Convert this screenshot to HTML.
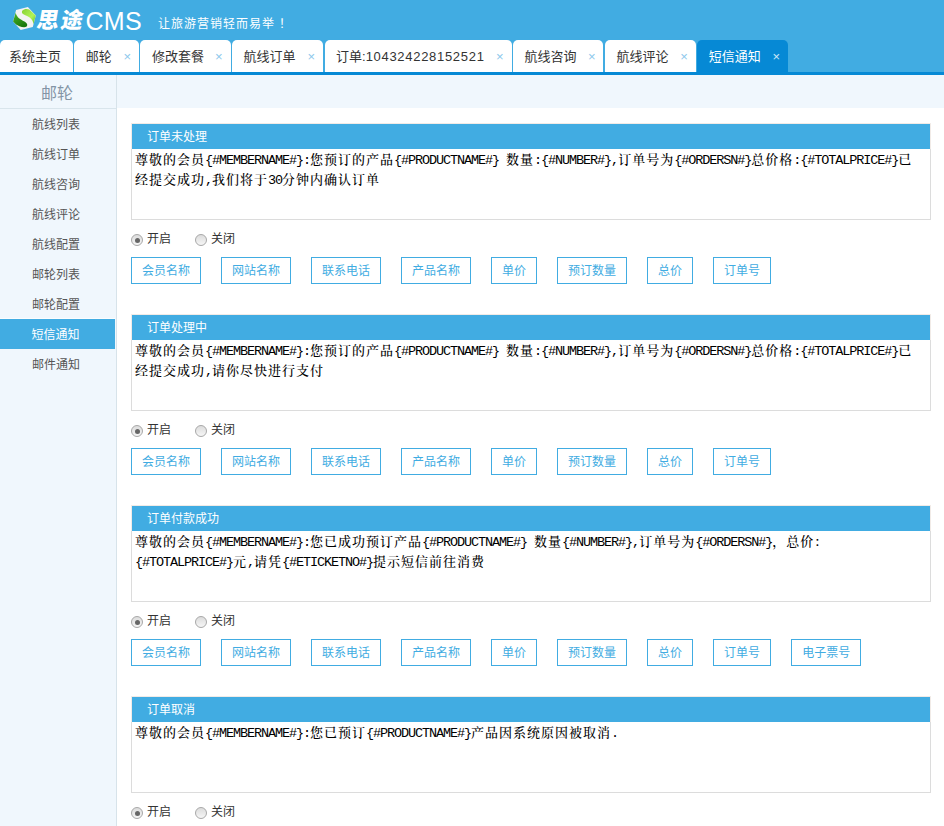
<!DOCTYPE html>
<html lang="zh-CN">
<head>
<meta charset="utf-8">
<title>思途CMS</title>
<style>
*{margin:0;padding:0;box-sizing:border-box;}
html,body{width:944px;height:826px;overflow:hidden;background:#fff;}
body{font-family:"Liberation Sans","Noto Sans CJK SC",sans-serif;font-size:12px;color:#333;position:relative;}
.header{position:absolute;left:0;top:0;width:944px;height:72px;background:#41ace2;}
.logo-icon{position:absolute;left:8px;top:2px;width:40px;height:35px;}
.logo-cn{position:absolute;left:37px;top:5px;font-size:22px;font-weight:900;color:#fff;line-height:32px;letter-spacing:2px;white-space:nowrap;transform:skewX(-10deg);}
.logo-en{position:absolute;left:85.5px;top:4.5px;font-size:25px;color:#fff;line-height:32px;letter-spacing:0.3px;font-weight:normal;white-space:nowrap;}
.slogan{position:absolute;left:158px;top:15px;font-size:12px;color:#fff;line-height:18px;letter-spacing:1px;white-space:nowrap;}
.tabs{position:absolute;left:0;top:40px;height:32px;white-space:nowrap;}
.tab{position:absolute;top:0;height:32px;background:#fff;border-radius:5px 5px 0 0;line-height:33px;font-size:13px;color:#333;padding-left:9px;white-space:nowrap;}
.tab .x{position:absolute;right:8px;top:0;color:#8cc8ec;font-size:13px;font-family:"Liberation Sans",sans-serif;}
.tab b{font-weight:normal;letter-spacing:0.7px;}
.tab.on{background:#0689d5;color:#fff;}
.tab.on .x{color:#cfe8f8;}
.line{position:absolute;left:0;top:72px;width:944px;height:3px;background:#0689d5;}
.side{position:absolute;left:0;top:75px;width:117px;height:751px;background:#f0f7fd;border-right:1px solid #d7e3ea;}
.side h3{height:34px;line-height:37px;text-align:center;font-size:16px;font-weight:normal;color:#8394a5;border-bottom:1px solid #d9e5ec;padding-right:2px;}
.side a{display:block;height:30px;line-height:32px;text-align:center;color:#555;font-size:12px;text-decoration:none;padding-right:4px;}
.side a.on{background:#41ace2;color:#fff;margin-right:1px;box-shadow:0 -1px 0 #fafdff;}
.band{position:absolute;left:117px;top:75px;width:827px;height:33px;background:#f0f7fd;}
.sec{position:absolute;left:131px;width:800px;}
.sec .hd{height:26px;line-height:27px;background:#41ace2;color:#fff;font-weight:normal;padding-left:15px;font-size:12px;border:1px solid #f1ebe7;border-bottom:none;}
.sec .ta{height:71px;border:1px solid #dcdcdc;border-top:none;padding:1px 4px 0 3px;font-family:"Noto Serif CJK SC",serif;font-size:13px;letter-spacing:1px;line-height:18px;color:#000;font-weight:500;}
.sec .ta i{font-style:normal;font-family:"Liberation Mono",monospace;font-size:13.5px;letter-spacing:-1.1px;font-weight:normal;}
.radios{position:absolute;left:131px;height:20px;line-height:20px;font-size:12px;color:#333;white-space:nowrap;}
.rd{display:inline-block;width:12px;height:12px;border-radius:50%;border:1px solid #a8a8a8;background:linear-gradient(#dcdcdc,#f6f6f6);vertical-align:-3px;margin-right:4px;position:relative;}
.rd.ck:after{content:"";position:absolute;left:2.5px;top:2.5px;width:5px;height:5px;border-radius:50%;background:#666;}
.btns{position:absolute;left:131px;height:27px;white-space:nowrap;}
.btn{display:inline-block;height:27px;line-height:27px;border:1px solid #41ace2;color:#41ace2;padding:0 10px;margin-right:20px;font-size:12px;background:#fff;vertical-align:top;}
</style>
</head>
<body>
<div class="header">
  <svg class="logo-icon" viewBox="0 0 944 826"><defs><linearGradient id="ga" x1="0" y1="0" x2="1" y2="1"><stop offset="0" stop-color="#86d032"/><stop offset="0.6" stop-color="#b2f456"/><stop offset="1" stop-color="#5fb82a"/></linearGradient><linearGradient id="gb" x1="0" y1="0" x2="0.6" y2="1"><stop offset="0" stop-color="#4cb82c"/><stop offset="1" stop-color="#1a780c"/></linearGradient></defs><path d="M190,190 L470,120 L655,320 L585,590 L300,660 L120,460 Z" fill="#f3f3f3"/><path d="M335,205 C375,160 455,150 500,178 L655,320 L598,530 C600,440 540,370 450,330 C380,300 305,275 335,205 Z" fill="url(#ga)"/><path d="M183,250 C190,330 260,400 350,440 C420,470 485,520 440,580 C400,605 330,595 270,570 L190,530 L120,460 Z" fill="url(#gb)"/></svg>
  <div class="logo-cn">思途</div>
  <div class="logo-en">CMS</div>
  <div class="slogan">让旅游营销轻而易举<span style="margin-left:4px">！</span></div>
</div>
<div class="tabs">
  <div class="tab" style="left:0px;width:73px;padding-left:9px;">系统主页</div>
  <div class="tab" style="left:74.2px;width:64.8px;padding-left:11.5px;">邮轮<span class="x">×</span></div>
  <div class="tab" style="left:140.4px;width:90.2px;padding-left:11.5px;">修改套餐<span class="x">×</span></div>
  <div class="tab" style="left:232.1px;width:90.9px;padding-left:11.5px;">航线订单<span class="x">×</span></div>
  <div class="tab" style="left:324.5px;width:187.1px;padding-left:11.5px;">订单:<b>104324228152521</b><span class="x">×</span></div>
  <div class="tab" style="left:513.1px;width:90.4px;padding-left:11.5px;">航线咨询<span class="x">×</span></div>
  <div class="tab" style="left:605px;width:90.9px;padding-left:11.5px;">航线评论<span class="x">×</span></div>
  <div class="tab on" style="left:697.2px;width:90.8px;padding-left:11.5px;">短信通知<span class="x">×</span></div>
</div>
<div class="line"></div>
<div class="side">
  <h3>邮轮</h3>
  <a>航线列表</a><a>航线订单</a><a>航线咨询</a><a>航线评论</a><a>航线配置</a><a>邮轮列表</a><a>邮轮配置</a><a class="on">短信通知</a><a>邮件通知</a>
</div>
<div class="band"></div>

<div class="sec" style="top:123px;"><div class="hd">订单未处理</div><div class="ta">尊敬的会员<i>{#MEMBERNAME#}:</i>您预订的产品<i>{#PRODUCTNAME#} </i>数量<i>:{#NUMBER#},</i>订单号为<i>{#ORDERSN#}</i>总价格<i>:{#TOTALPRICE#}</i>已经提交成功<i>,</i>我们将于<i>30</i>分钟内确认订单</div></div>
<div class="radios" style="top:229px;"><span class="rd ck"></span>开启<span style="display:inline-block;width:24px"></span><span class="rd" style="margin-right:4px"></span>关闭</div>
<div class="btns" style="top:257px;"><span class="btn">会员名称</span><span class="btn">网站名称</span><span class="btn">联系电话</span><span class="btn">产品名称</span><span class="btn">单价</span><span class="btn">预订数量</span><span class="btn">总价</span><span class="btn">订单号</span></div>

<div class="sec" style="top:314px;"><div class="hd">订单处理中</div><div class="ta">尊敬的会员<i>{#MEMBERNAME#}:</i>您预订的产品<i>{#PRODUCTNAME#} </i>数量<i>:{#NUMBER#},</i>订单号为<i>{#ORDERSN#}</i>总价格<i>:{#TOTALPRICE#}</i>已经提交成功<i>,</i>请你尽快进行支付</div></div>
<div class="radios" style="top:420px;"><span class="rd ck"></span>开启<span style="display:inline-block;width:24px"></span><span class="rd" style="margin-right:4px"></span>关闭</div>
<div class="btns" style="top:448px;"><span class="btn">会员名称</span><span class="btn">网站名称</span><span class="btn">联系电话</span><span class="btn">产品名称</span><span class="btn">单价</span><span class="btn">预订数量</span><span class="btn">总价</span><span class="btn">订单号</span></div>

<div class="sec" style="top:505px;"><div class="hd">订单付款成功</div><div class="ta">尊敬的会员<i>{#MEMBERNAME#}:</i>您已成功预订产品<i>{#PRODUCTNAME#} </i>数量<i>{#NUMBER#},</i>订单号为<i>{#ORDERSN#}</i>，总价：<br><i>{#TOTALPRICE#}</i>元<i>,</i>请凭<i>{#ETICKETNO#}</i>提示短信前往消费</div></div>
<div class="radios" style="top:611px;"><span class="rd ck"></span>开启<span style="display:inline-block;width:24px"></span><span class="rd" style="margin-right:4px"></span>关闭</div>
<div class="btns" style="top:639px;"><span class="btn">会员名称</span><span class="btn">网站名称</span><span class="btn">联系电话</span><span class="btn">产品名称</span><span class="btn">单价</span><span class="btn">预订数量</span><span class="btn">总价</span><span class="btn">订单号</span><span class="btn">电子票号</span></div>

<div class="sec" style="top:696px;"><div class="hd">订单取消</div><div class="ta">尊敬的会员<i>{#MEMBERNAME#}:</i>您已预订<i>{#PRODUCTNAME#}</i>产品因系统原因被取消<i>.</i></div></div>
<div class="radios" style="top:802px;"><span class="rd ck"></span>开启<span style="display:inline-block;width:24px"></span><span class="rd" style="margin-right:4px"></span>关闭</div>
</body>
</html>
